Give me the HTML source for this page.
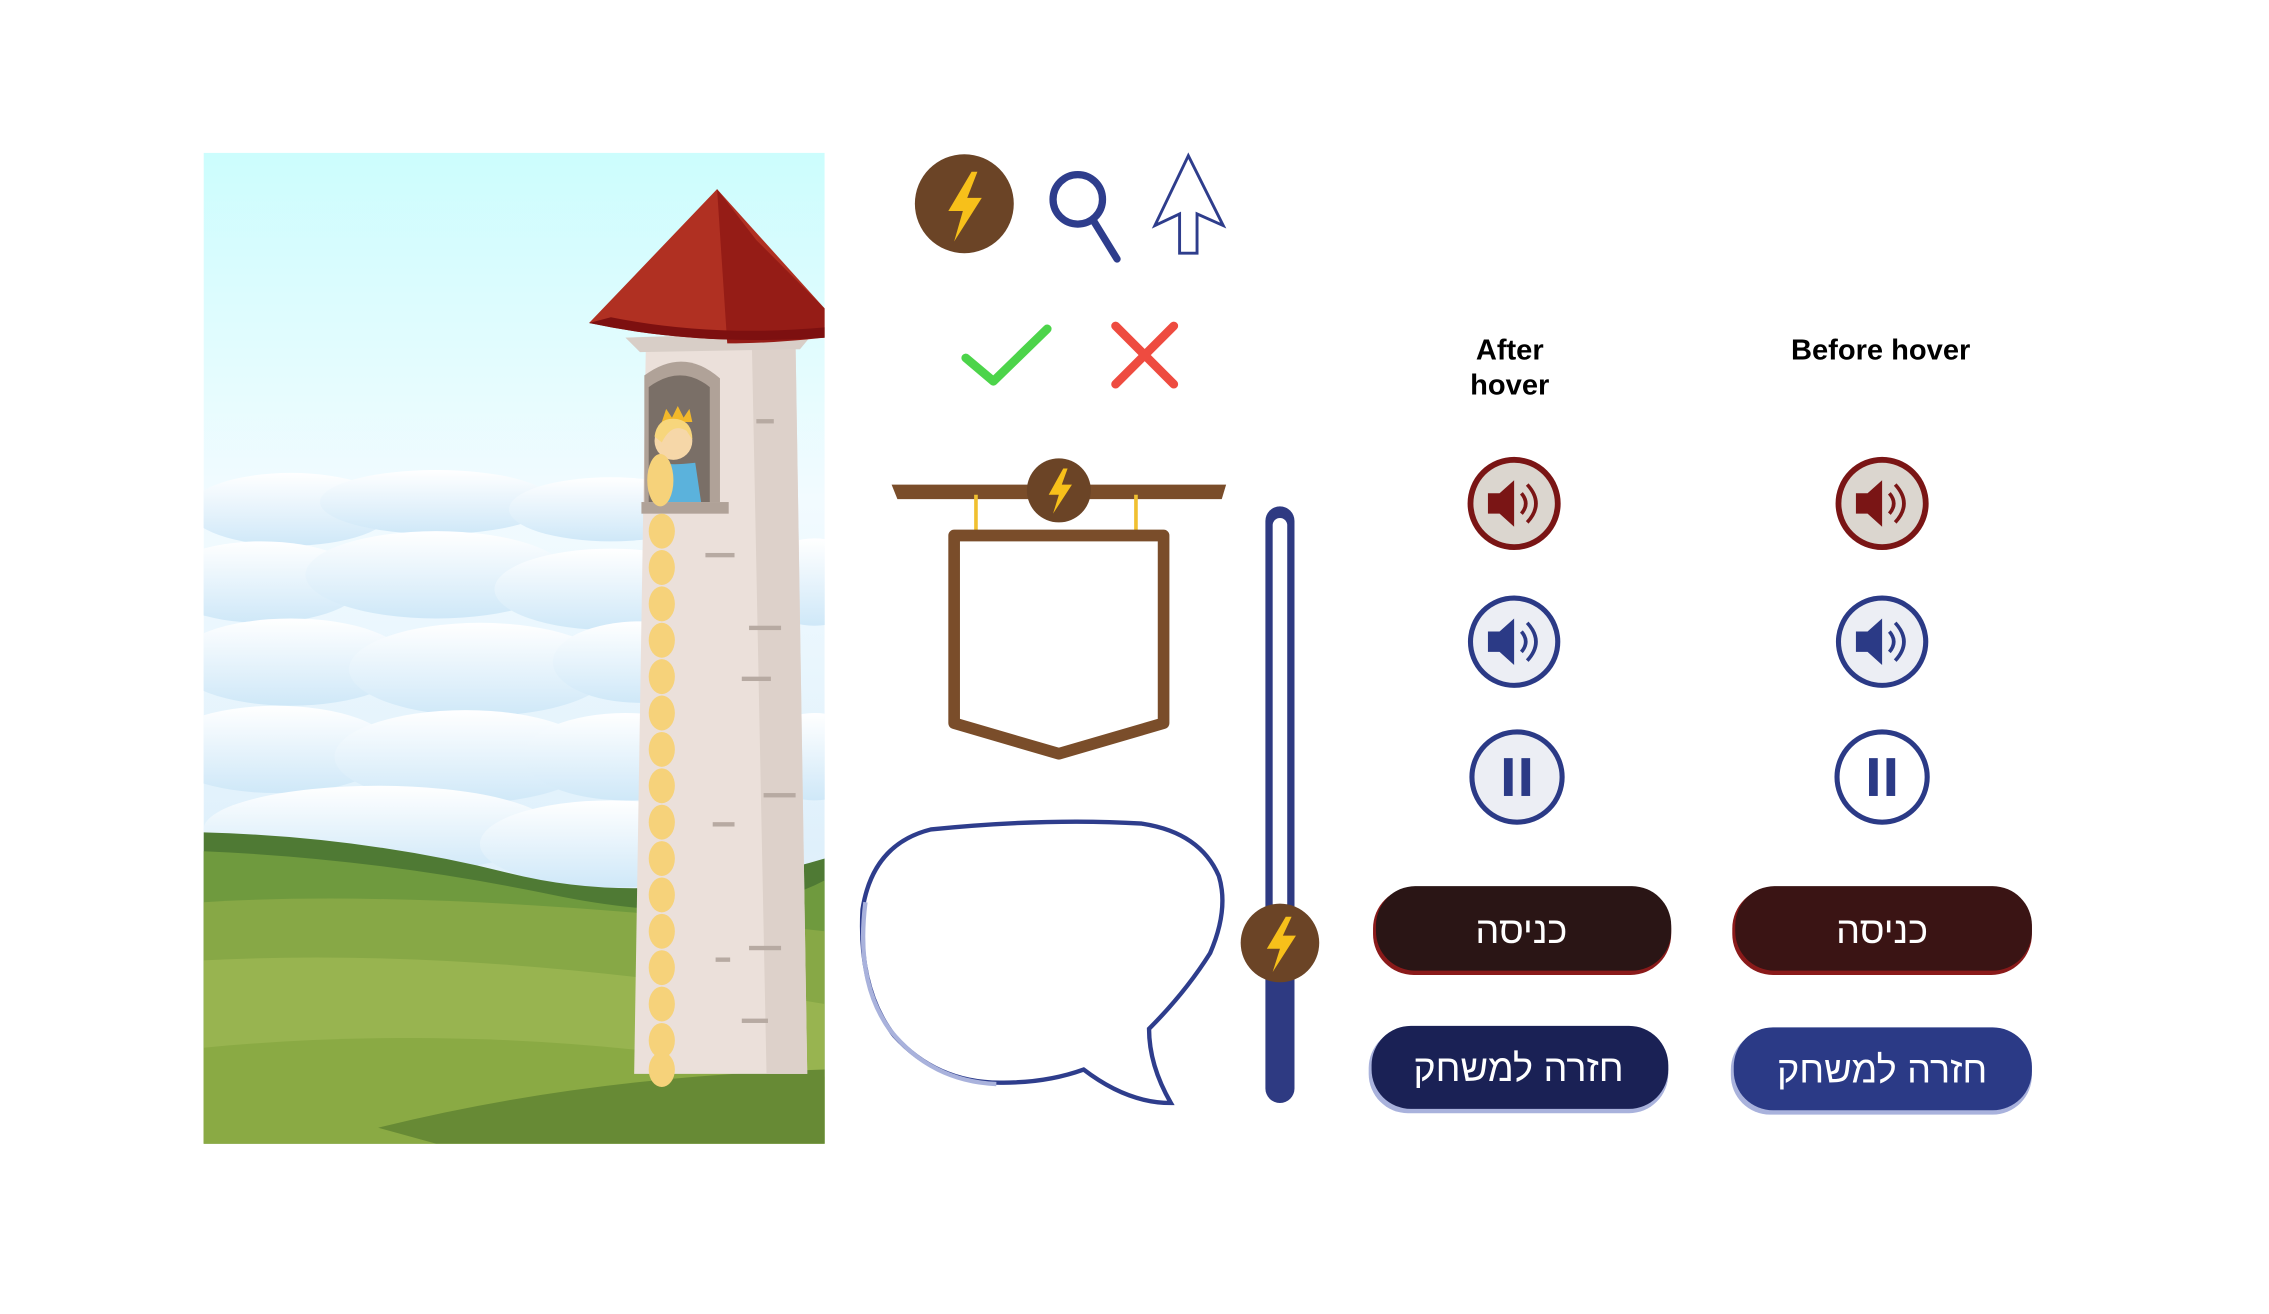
<!DOCTYPE html>
<html><head><meta charset="utf-8"><style>
html,body{margin:0;padding:0;background:#fff;width:2269px;height:1314px;overflow:hidden}
svg{display:block}
text{font-family:"Liberation Sans","DejaVu Sans",sans-serif}
</style></head><body>
<svg width="2269" height="1314" viewBox="0 0 1560 903" preserveAspectRatio="none" xmlns="http://www.w3.org/2000/svg">
<defs>
<linearGradient id="sky" x1="0" y1="0" x2="0" y2="1">
<stop offset="0" stop-color="#ccfdfd"/><stop offset="0.35" stop-color="#f2fbff"/><stop offset="0.7" stop-color="#dff0fb"/><stop offset="1" stop-color="#eef8ff"/>
</linearGradient>
<linearGradient id="cloud" x1="0" y1="0" x2="0" y2="1"><stop offset="0" stop-color="#fff"/><stop offset="1" stop-color="#cfe8f8"/></linearGradient>
<clipPath id="pic"><rect x="140" y="105" width="427" height="681"/></clipPath>
</defs>
<g clip-path="url(#pic)">
<rect x="140" y="105" width="427" height="681" fill="url(#sky)"/>
<g fill="url(#cloud)">
<ellipse cx="200" cy="350" rx="70" ry="25"/><ellipse cx="300" cy="345" rx="80" ry="22"/><ellipse cx="420" cy="350" rx="70" ry="22"/>
<ellipse cx="180" cy="400" rx="70" ry="28"/><ellipse cx="300" cy="395" rx="90" ry="30"/><ellipse cx="420" cy="405" rx="80" ry="28"/>
<ellipse cx="200" cy="455" rx="80" ry="30"/><ellipse cx="330" cy="460" rx="90" ry="32"/><ellipse cx="440" cy="455" rx="60" ry="28"/>
<ellipse cx="190" cy="515" rx="80" ry="30"/><ellipse cx="320" cy="520" rx="90" ry="32"/><ellipse cx="430" cy="520" rx="70" ry="30"/>
<ellipse cx="260" cy="570" rx="120" ry="30"/><ellipse cx="420" cy="580" rx="90" ry="30"/>
<ellipse cx="560" cy="400" rx="40" ry="30"/><ellipse cx="560" cy="520" rx="40" ry="30"/>
</g>
<path d="M140 572 Q250 575 350 600 T567 590 L567 786 L140 786Z" fill="#4f7a34"/>
<path d="M140 585 Q260 590 380 615 T567 605 L567 786 L140 786Z" fill="#6f9a3e"/>
<path d="M140 620 Q300 610 567 640 L567 786 L140 786Z" fill="#87a846"/>
<path d="M140 660 Q330 650 567 690 L567 786 L140 786Z" fill="#98b450"/>
<path d="M140 720 Q350 700 567 740 L567 786 L140 786Z" fill="#8aaa44"/>
<path d="M260 775 Q400 740 567 735 L567 786 L300 786Z" fill="#678a35"/>
<path d="M444 240 L547 238 L555 738 L436 738Z" fill="#ebe0da"/>
<path d="M517 240 L547 238 L555 738 L527 738Z" fill="#ddd1ca"/>
<path d="M430 232 L560 228 L550 240 L440 242Z" fill="#d8cec7"/>
<path d="M493 130 L405 222 Q480 238 567 232 L567 212 Z" fill="#b03022"/>
<path d="M493 130 L520 165 L567 212 L567 232 Q530 236 500 236Z" fill="#951c16"/>
<path d="M405 222 Q480 238 567 232 L567 225 Q490 232 420 218Z" fill="#7d1010"/>
<path d="M443 258 Q470 238 495 260 L495 345 L443 345Z" fill="#b0a298"/>
<path d="M446 266 Q468 250 488 266 L488 345 L446 345Z" fill="#7a6f67"/>
<rect x="441" y="345" width="60" height="8" fill="#b0a298"/>
<path d="M455 290 L458 281 L462 287 L466 279 L470 287 L474 281 L476 290Z" fill="#f2b82a"/>
<path d="M457 318 Q460 320 478 318 L482 345 L455 345Z" fill="#5bb2dc"/>
<circle cx="463" cy="303" r="13" fill="#f6d7a8"/>
<path d="M450 300 Q452 286 466 288 Q476 290 476 302 L472 296 Q462 290 455 304 Z" fill="#f7d67c"/>
<g fill="#f6d27a">
<ellipse cx="454" cy="330" rx="9" ry="18"/>
<ellipse cx="455" cy="365" rx="9" ry="12"/><ellipse cx="455" cy="390" rx="9" ry="12"/><ellipse cx="455" cy="415" rx="9" ry="12"/>
<ellipse cx="455" cy="440" rx="9" ry="12"/><ellipse cx="455" cy="465" rx="9" ry="12"/><ellipse cx="455" cy="490" rx="9" ry="12"/>
<ellipse cx="455" cy="515" rx="9" ry="12"/><ellipse cx="455" cy="540" rx="9" ry="12"/><ellipse cx="455" cy="565" rx="9" ry="12"/>
<ellipse cx="455" cy="590" rx="9" ry="12"/><ellipse cx="455" cy="615" rx="9" ry="12"/><ellipse cx="455" cy="640" rx="9" ry="12"/>
<ellipse cx="455" cy="665" rx="9" ry="12"/><ellipse cx="455" cy="690" rx="9" ry="12"/><ellipse cx="455" cy="715" rx="9" ry="12"/><ellipse cx="455" cy="735" rx="9" ry="12"/>
</g>
<g fill="#b7aaa2">
<rect x="520" y="288" width="12" height="3"/><rect x="485" y="380" width="20" height="3"/><rect x="515" y="430" width="22" height="3"/>
<rect x="510" y="465" width="20" height="3"/><rect x="525" y="545" width="22" height="3"/><rect x="490" y="565" width="15" height="3"/>
<rect x="515" y="650" width="22" height="3"/><rect x="510" y="700" width="18" height="3"/><rect x="492" y="658" width="10" height="3"/>
</g>
</g>
<circle cx="663" cy="140" r="34" fill="#6b4426"/>
<path d="M668 118 L652 145 L662 145 L656 166 L675 136 L665 136 L672 118Z" fill="#f7c01a"/>
<circle cx="741" cy="137" r="17" fill="none" stroke="#2e3d8c" stroke-width="5"/>
<line x1="752" y1="152" x2="768" y2="178" stroke="#2e3d8c" stroke-width="5" stroke-linecap="round"/>
<path d="M817 107 L794 155 L811 147 L811 174 L823 174 L823 147 L841 155Z" fill="#fff" stroke="#2e3d8c" stroke-width="2"/>
<path d="M664 246 L683 262 L720 226" fill="none" stroke="#4cd44a" stroke-width="6" stroke-linecap="round" stroke-linejoin="round"/>
<path d="M767 224 L807 264 M807 224 L767 264" stroke="#ee4b40" stroke-width="6" stroke-linecap="round"/>
<path d="M613 333 L843 333 L840 343 L617 343Z" fill="#7a4d2a"/>
<line x1="671" y1="340" x2="671" y2="365" stroke="#f0c030" stroke-width="2.5"/>
<line x1="781" y1="340" x2="781" y2="365" stroke="#f0c030" stroke-width="2.5"/>
<circle cx="728" cy="337" r="22" fill="#6b4426"/>
<path d="M731 322 L721 340 L728 340 L724 353 L737 333 L730 333 L734 322Z" fill="#f7c01a"/>
<path d="M656 368 L800 368 L800 497 L728 518 L656 497Z" fill="#fff" stroke="#7a4d2a" stroke-width="8" stroke-linejoin="round"/>
<path d="M640 570 Q600 580 593 625 Q590 680 615 712 Q645 745 690 744 Q720 744 745 735 Q775 758 805 758 Q790 732 790 707 Q815 682 832 655 Q845 625 838 602 Q825 572 785 566 Q720 562 640 570 Z" fill="#fff" stroke="#2e3d8c" stroke-width="3"/>
<path d="M595 620 Q588 675 612 708 Q640 743 685 745" fill="none" stroke="#a9b2dc" stroke-width="3"/>
<rect x="870" y="348" width="20" height="410" rx="10" fill="#2e3a82"/>
<rect x="875" y="356" width="10" height="270" rx="5" fill="#fff"/>
<circle cx="880" cy="648" r="27" fill="#6b4426"/>
<path d="M884 630 L871 652 L880 652 L875 668 L891 643 L882 643 L888 630Z" fill="#f7c01a"/>
<text x="1038" y="247" text-anchor="middle" font-size="20" font-weight="bold" fill="#000">After</text>
<text x="1038" y="271" text-anchor="middle" font-size="20" font-weight="bold" fill="#000">hover</text>
<text x="1293" y="247" text-anchor="middle" font-size="20" font-weight="bold" fill="#000">Before hover</text>
<g id="sr">
<circle cx="1041" cy="346" r="30" fill="#dbd6cf" stroke="#7a1515" stroke-width="4"/>
<path d="M1023 339 L1031 339 L1041 330 L1041 362 L1031 353 L1023 353Z" fill="#7a1515"/>
<path d="M1046 339 Q1052 346 1046 353 M1050 333 Q1062 346 1050 359" fill="none" stroke="#7a1515" stroke-width="2.5"/>
</g>
<use href="#sr" x="253"/>
<g id="sb">
<circle cx="1041" cy="441" r="30" fill="#eceef4" stroke="#2b3a86" stroke-width="3.5"/>
<path d="M1023 434 L1031 434 L1041 425 L1041 457 L1031 448 L1023 448Z" fill="#2b3a86"/>
<path d="M1046 434 Q1052 441 1046 448 M1050 428 Q1062 441 1050 454" fill="none" stroke="#2b3a86" stroke-width="2.5"/>
</g>
<use href="#sb" x="253"/>
<circle cx="1043" cy="534" r="31" fill="#eceef4" stroke="#2b3a86" stroke-width="3.5"/>
<rect x="1034" y="521" width="6" height="26" fill="#2b3a86"/><rect x="1046" y="521" width="6" height="26" fill="#2b3a86"/>
<circle cx="1294" cy="534" r="31" fill="#fff" stroke="#2b3a86" stroke-width="3.5"/>
<rect x="1285" y="521" width="6" height="26" fill="#2b3a86"/><rect x="1297" y="521" width="6" height="26" fill="#2b3a86"/>
<rect x="944" y="610" width="205" height="60" rx="28" fill="#8a1a1a"/>
<rect x="946" y="609" width="203" height="58" rx="27" fill="#2a1515"/>
<rect x="1191" y="610" width="206" height="60" rx="28" fill="#8a1a1a"/>
<rect x="1193" y="609" width="204" height="58" rx="27" fill="#3a1414"/>
<text x="1046" y="648" text-anchor="middle" font-size="26" fill="#fff">כניסה</text>
<text x="1294" y="648" text-anchor="middle" font-size="26" fill="#fff">כניסה</text>
<rect x="941" y="707" width="206" height="58" rx="27" fill="#a9b2dc"/>
<rect x="943" y="705" width="204" height="57" rx="27" fill="#1a2155"/>
<rect x="1190" y="708" width="207" height="58" rx="27" fill="#a9b2dc"/>
<rect x="1192" y="706" width="205" height="57" rx="27" fill="#2b3a86"/>
<text x="1044" y="743" text-anchor="middle" font-size="26" fill="#fff">חזרה למשחק</text>
<text x="1294" y="744" text-anchor="middle" font-size="26" fill="#fff">חזרה למשחק</text>
</svg>
</body></html>
